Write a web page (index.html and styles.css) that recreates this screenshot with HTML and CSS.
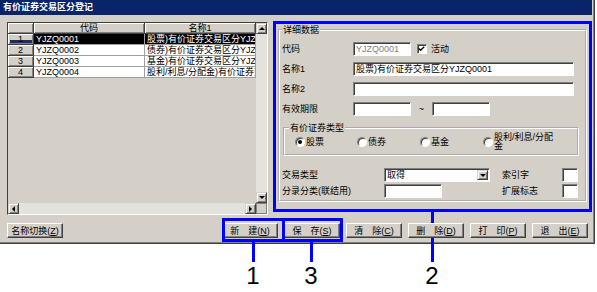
FILE: index.html
```html
<!DOCTYPE html>
<html lang="zh-CN">
<head>
    <meta charset="UTF-8">
    <meta name="viewport" content="width=device-width, initial-scale=1.0">
    <title>有价证券交易区分登记</title>
    <link rel="stylesheet" href="styles.css">
</head>
<body>
    <div id="window">
        <div id="title-bar">有价证券交易区分登记</div>

        <div id="main">
            <!-- lista -->
            <div id="grid">
                <div id="grid-view">
                    <div id="grid-cells">
                        <table id="grid-table">
                            <colgroup>
                                <col class="col-head">
                                <col class="col-code">
                                <col class="col-name">
                            </colgroup>
                            <tr><th></th><th>代码</th><th>名称1</th></tr>
                            <tr class="selected"><th class="current">1</th><td>YJZQ0001</td><td>股票)有价证券交易区分YJZQ0001</td></tr>
                            <tr><th>2</th><td>YJZQ0002</td><td>债券)有价证券交易区分YJZQ0002</td></tr>
                            <tr><th>3</th><td>YJZQ0003</td><td>基金)有价证券交易区分YJZQ0003</td></tr>
                            <tr><th>4</th><td>YJZQ0004</td><td>股利/利息/分配金)有价证券交易区分YJZQ0004</td></tr>
                        </table>
                    </div>
                    <div class="vscroll">
                        <div class="sb-btn up"></div>
                        <div class="sb-track"></div>
                        <div class="sb-btn down"></div>
                    </div>
                </div>
                <div id="grid-bottom">
                    <div class="hscroll">
                        <div class="sb-btn left"></div>
                        <div class="sb-track"></div>
                        <div class="sb-btn right"></div>
                    </div>
                    <div class="sb-corner"></div>
                </div>
            </div>

            <!-- detalle -->
            <div id="detail-panel">
                <fieldset id="detail-group">
                    <legend>详细数据</legend>
                    <div class="row">
                        <span class="label">代码</span>
                        <div class="edit w-short disabled">YJZQ0001</div>
                        <span class="check">
                            <svg width="10" height="10" viewBox="0 0 10 10"><polyline points="2,4.5 4,6.5 8,2.5" fill="none" stroke="#000" stroke-width="1.5"/></svg>
                        </span>
                        <span class="check-label">活动</span>
                    </div>
                    <div class="row">
                        <span class="label">名称1</span>
                        <div class="edit w-long">股票)有价证券交易区分YJZQ0001</div>
                    </div>
                    <div class="row">
                        <span class="label">名称2</span>
                        <div class="edit w-long"></div>
                    </div>
                    <div class="row">
                        <span class="label">有效期限</span>
                        <div class="edit w-short"></div>
                        <span class="tilde">~</span>
                        <div class="edit w-short"></div>
                    </div>

                    <fieldset id="type-group">
                        <legend>有价证券类型</legend>
                        <div class="radios">
                            <div class="radio-item item-1"><span class="radio checked"></span><span>股票</span></div>
                            <div class="radio-item item-2"><span class="radio"></span><span>债券</span></div>
                            <div class="radio-item item-3"><span class="radio"></span><span>基金</span></div>
                            <div class="radio-item"><span class="radio"></span><span class="two-line">股利/利息/分配<br>金</span></div>
                        </div>
                    </fieldset>

                    <div class="row-lower" id="trade-row">
                        <span class="label-wide">交易类型</span>
                        <div class="edit combo">
                            <span>取得</span>
                            <span class="sb-btn combo-btn down"></span>
                        </div>
                        <span class="label-side">索引字</span>
                        <div class="edit w-tiny"></div>
                    </div>
                    <div class="row-lower">
                        <span class="label-wide">分录分类(联结用)</span>
                        <div class="edit w-short"></div>
                        <span class="label-side label-far">扩展标志</span>
                        <div class="edit w-tiny"></div>
                    </div>
                </fieldset>
            </div>
        </div>

        <div id="button-row">
            <button class="btn">名称切换(<u>Z</u>)</button>
            <button class="btn" id="btn-new">新　建(<u>N</u>)</button>
            <button class="btn">保　存(<u>S</u>)</button>
            <button class="btn">清　除(<u>C</u>)</button>
            <button class="btn">删　除(<u>D</u>)</button>
            <button class="btn">打　印(<u>P</u>)</button>
            <button class="btn">退　出(<u>E</u>)</button>
        </div>
    </div>

    <!-- marcas de explicación -->
    <div class="callout callout-new"></div>
    <div class="callout callout-save"></div>
    <div class="leader leader-1"></div>
    <div class="leader leader-3"></div>
    <div class="leader leader-2a"></div>
    <div class="leader leader-2b"></div>
    <span class="callout-num num-1">1</span>
    <span class="callout-num num-3">3</span>
    <span class="callout-num num-2">2</span>
</body>
</html>
```

FILE: styles.css
```css
body {
    margin: 0;
    background: #fff;
    font-family: "Liberation Sans Narrow", "Liberation Sans", "Noto Sans CJK SC", sans-serif;
    font-size: 9px;
    line-height: 11px;
    color: #000;
}

#window {
    width: 595px;
    height: 244px;
    box-sizing: border-box;
    padding-right: 2px;
    background: #d4d0c8;
    border-right: 1px solid #404040;
    border-bottom: 1px solid #404040;
    box-shadow: inset -1px -1px #808080;
}

#title-bar {
    height: 15px;
    line-height: 15px;
    padding-left: 3px;
    background: #0a246a;
    color: #fff;
    font-weight: bold;
}

#main {
    display: flex;
    align-items: flex-start;
    gap: 5px;
    padding: 6px 0 0 7px;
}

/* Lista */
#grid {
    width: 261px;
    height: 193px;
    box-sizing: border-box;
    margin-top: 1px;
    border: 1px solid;
    border-color: #404040 #fff #fff #404040;
    display: flex;
    flex-direction: column;
}

#grid-view {
    display: flex;
    height: 180px;
}

#grid-cells {
    width: 248px;
    overflow: hidden;
}

#grid-table {
    width: 248px;
    table-layout: fixed;
    border-collapse: separate;
    border-spacing: 0;
}

.col-head { width: 26px; }
.col-code { width: 111px; }
.col-name { width: 111px; }

#grid-table th,
#grid-table td {
    height: 10px;
    line-height: 10px;
    padding: 0;
    border-right: 1px solid;
    border-bottom: 1px solid;
    overflow: hidden;
    white-space: nowrap;
    font-weight: normal;
}

#grid-table th {
    background: #d4d0c8;
    border-color: #404040;
    box-shadow: inset 1px 1px #fff, inset -1px -1px #808080;
    text-align: center;
}

#grid-table th.current {
    background: linear-gradient(#1f2c6b, #1f2c6b) no-repeat center bottom 1px / 22px 3px, #d4d0c8;
}

#grid-table td {
    background: #fff;
    border-color: #a0a0a0;
    padding-left: 2px;
    text-align: left;
}

#grid-table tr.selected td {
    background: #000;
    color: #fff;
}

.vscroll {
    width: 11px;
    display: flex;
    flex-direction: column;
}

.hscroll {
    width: 248px;
    display: flex;
}

#grid-bottom {
    display: flex;
    height: 11px;
}

.sb-track {
    flex: 1;
    background: #e4e2dc;
}

.sb-btn {
    width: 11px;
    height: 11px;
    flex: none;
    box-sizing: border-box;
    border: 1px solid;
    border-color: #d4d0c8 #404040 #404040 #d4d0c8;
    box-shadow: inset 1px 1px #fff, inset -1px -1px #808080;
    background: #d4d0c8;
    display: flex;
    align-items: center;
    justify-content: center;
}

.sb-btn::before {
    content: "";
    border: 3px solid transparent;
}

.up::before { border-top: 0; border-bottom-color: #000; }
.down::before { border-bottom: 0; border-top-color: #000; }
.left::before { border-left: 0; border-right-color: #000; }
.right::before { border-right: 0; border-left-color: #000; }

.sb-corner {
    width: 11px;
    box-sizing: border-box;
    border: 1px solid #808080;
    background: #d4d0c8;
}

/* Detalle */
#detail-panel {
    width: 320px;
    height: 191px;
    box-sizing: border-box;
    border: 3px solid #0000ff;
    padding: 0 2px;
}

fieldset {
    margin: 0;
    border: 2px groove #fff;
}

legend {
    padding: 0 1px;
    line-height: 12px;
}

#detail-group {
    padding: 6px 0 2px 2px;
}

.row {
    display: flex;
    align-items: center;
    height: 14px;
    margin-bottom: 6px;
}

.label {
    width: 71px;
    flex: none;
}

.edit {
    height: 14px;
    box-sizing: border-box;
    flex: none;
    border: 1px solid;
    border-color: #808080 #fff #fff #808080;
    box-shadow: inset 1px 1px #404040;
    background: #fff;
    padding: 0 2px;
    line-height: 12px;
    white-space: nowrap;
    overflow: hidden;
}

.edit.disabled {
    color: #808080;
}

.w-short { width: 58px; }
.w-long { width: 221px; }
.w-tiny { width: 16px; }

.check {
    margin-left: 6px;
    width: 10px;
    height: 10px;
    box-sizing: border-box;
    border: 1px solid;
    border-color: #808080 #fff #fff #808080;
    box-shadow: inset 1px 1px #404040;
    background: #fff;
    display: flex;
}

.check svg {
    margin: -1px 0 0 -1px;
}

.check-label {
    margin-left: 4px;
}

.tilde {
    width: 21px;
    text-align: center;
}

#type-group {
    margin: 5px 0 0 1px;
    width: 296px;
    box-sizing: border-box;
    padding: 0 0 4px 4px;
}

.radios {
    display: flex;
    align-items: center;
    height: 16px;
    margin-left: 6px;
}

.radio-item {
    display: flex;
    align-items: center;
    flex: none;
}

.item-1 { width: 62px; }
.item-2 { width: 63px; }
.item-3 { width: 63px; }

.radio {
    width: 10px;
    height: 10px;
    box-sizing: border-box;
    margin-right: 1px;
    border-radius: 50%;
    border: 1px solid;
    border-color: #808080 #fff #fff #808080;
    box-shadow: inset 1px 1px #404040;
    background: #fff;
    display: flex;
    align-items: center;
    justify-content: center;
}

.radio.checked::after {
    content: "";
    width: 4px;
    height: 4px;
    border-radius: 50%;
    background: #000;
}

.two-line {
    line-height: 9px;
}

.row-lower {
    display: flex;
    align-items: center;
    height: 14px;
}

#trade-row {
    margin: 12px 0 2px;
}

.label-wide {
    width: 102px;
    flex: none;
}

.combo {
    width: 106px;
    display: flex;
    align-items: center;
    justify-content: space-between;
    padding: 0 1px 0 2px;
}

.combo-btn {
    height: 10px;
}

.label-side {
    margin-left: 12px;
    width: 60px;
    flex: none;
}

.label-far {
    margin-left: 60px;
}

/* Botones */
#button-row {
    display: flex;
    gap: 6px;
    margin-top: 8px;
    padding: 0 4px 0 7px;
}

.btn {
    width: 56px;
    height: 15px;
    padding: 0;
    font: inherit;
    line-height: 12px;
    color: #000;
    background: #d4d0c8;
    border: 1px solid;
    border-color: #fff #404040 #404040 #fff;
    box-shadow: inset -1px -1px #808080;
    text-align: center;
    white-space: nowrap;
}

#btn-new {
    margin-left: auto;
}

/* Marcas azules */
.callout {
    position: absolute;
    border: 3px solid #0000ff;
}

.callout-new { left: 222px; top: 218px; width: 57px; height: 18px; }
.callout-save { left: 282px; top: 218px; width: 55px; height: 18px; }

.leader {
    position: absolute;
    width: 3px;
    background: #0000ff;
}

.leader-1 { left: 252px; top: 242px; height: 20px; }
.leader-3 { left: 310px; top: 242px; height: 20px; }
.leader-2a { left: 431px; top: 212px; height: 11px; }
.leader-2b { left: 431px; top: 238px; height: 24px; }

.callout-num {
    position: absolute;
    top: 264px;
    width: 20px;
    text-align: center;
    font-family: "Liberation Sans", sans-serif;
    font-size: 24px;
    line-height: 24px;
}

.num-1 { left: 243px; }
.num-3 { left: 301px; }
.num-2 { left: 422px; }
```
